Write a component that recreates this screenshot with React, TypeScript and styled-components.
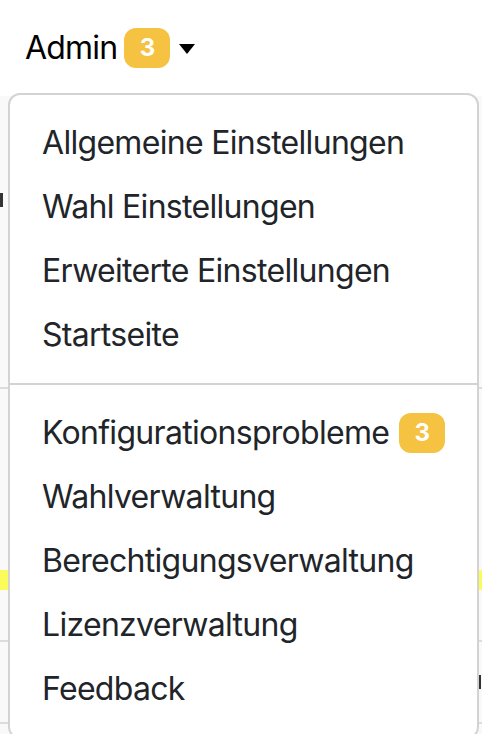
import React from 'react';
import styled, { createGlobalStyle } from 'styled-components';

const GlobalStyle = createGlobalStyle`
	html, body {
		margin: 0;
		padding: 0;
		background: #ffffff;
	}
	body {
		font-family: Inter, 'Noto Sans', sans-serif;
		color: #212529;
	}
`;

const Page = styled.div`
	position: relative;
	width: 482px;
	height: 734px;
	overflow: hidden;
`;

const NavBar = styled.div`
	display: flex;
	align-items: center;
	height: 96px;
	padding-left: 25px;
	background: #ffffff;
`;

const Toggle = styled.div`
	display: flex;
	align-items: center;
	gap: 7px;
	font-size: 32px;
	line-height: 48px;
	letter-spacing: -0.8px;
	color: #000000;
`;

const Caret = styled.span`
	width: 0;
	height: 0;
	margin-left: 2px;
	margin-top: 2px;
	border-top: 10px solid #000000;
	border-left: 8px solid transparent;
	border-right: 8px solid transparent;
`;

const Badge = styled.span`
	display: inline-flex;
	align-items: center;
	justify-content: center;
	height: 40px;
	min-width: 46px;
	padding: 0 15px;
	box-sizing: border-box;
	border-radius: 12px;
	background: #f5c242;
	color: #ffffff;
	font-size: 24px;
	font-weight: 700;
	line-height: 1;
	letter-spacing: 0;
`;

const Content = styled.div`
	background: #f9f9f9;
	display: flex;
	flex-direction: column;
`;

const BgRow = styled.div<{ $h: number; $yellow?: boolean; $line?: boolean }>`
	position: relative;
	height: ${(p) => p.$h}px;
	background: ${(p) => (p.$yellow ? '#fbfb5a' : 'transparent')};
	border-bottom: ${(p) => (p.$line ? '2px solid #dcdcdc' : 'none')};
	box-sizing: border-box;
`;

const Stub = styled.span<{ $side: 'left' | 'right' }>`
	position: absolute;
	top: 50%;
	${(p) => (p.$side === 'left' ? 'left: 0;' : 'right: 1px;')}
	width: 3px;
	height: 14px;
	transform: translateY(-50%);
	background: #333333;
`;

const Menu = styled.div`
	position: absolute;
	top: 93px;
	left: 8px;
	width: 471px;
	box-sizing: border-box;
	padding: 16px 0;
	background: #ffffff;
	border: 2px solid #d3d3d3;
	border-radius: 12px;
`;

const Item = styled.a`
	display: flex;
	align-items: center;
	gap: 10px;
	padding: 8px 32px;
	font-size: 32px;
	line-height: 48px;
	letter-spacing: -0.7px;
	color: #212529;
	text-decoration: none;
	white-space: nowrap;
`;

const Divider = styled.hr`
	margin: 16px 0;
	border: 0;
	border-top: 2px solid #d3d3d3;
`;

const groups: { label: string; badge?: number }[][] = [
	[{ label: 'Allgemeine Einstellungen' }, { label: 'Wahl Einstellungen' }, { label: 'Erweiterte Einstellungen' }, { label: 'Startseite' }],
	[
		{ label: 'Konfigurationsprobleme', badge: 3 },
		{ label: 'Wahlverwaltung' },
		{ label: 'Berechtigungsverwaltung' },
		{ label: 'Lizenzverwaltung' },
		{ label: 'Feedback' }
	]
];

export default function App() {
	return (
		<Page>
			<GlobalStyle />
			<NavBar>
				<Toggle>
					Admin
					<Badge>3</Badge>
					<Caret />
				</Toggle>
			</NavBar>
			<Content>
				<BgRow $h={208}>
					<Stub $side='left' />
				</BgRow>
				<BgRow $h={85} $line />
				<BgRow $h={181} />
				<BgRow $h={20} $yellow />
				<BgRow $h={52} $line />
				<BgRow $h={82} $line>
					<Stub $side='right' />
				</BgRow>
				<BgRow $h={20} />
			</Content>
			<Menu>
				{groups.map((group, gi) => (
					<React.Fragment key={gi}>
						{gi > 0 && <Divider />}
						{group.map((item) => (
							<Item key={item.label} href='#'>
								{item.label}
								{item.badge && <Badge>{item.badge}</Badge>}
							</Item>
						))}
					</React.Fragment>
				))}
			</Menu>
		</Page>
	);
}
